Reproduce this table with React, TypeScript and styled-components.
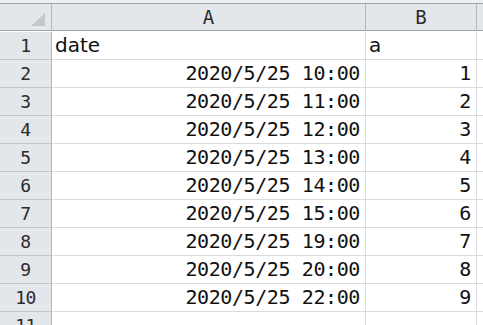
import React from "react";
import styled, { createGlobalStyle } from "styled-components";

const GlobalStyle = createGlobalStyle`
  html, body {
    margin: 0;
    padding: 0;
    background: #ffffff;
    overflow: hidden;
  }
`;

const Window = styled.div`
  width: 483px;
  height: 325px;
  overflow: hidden;
  background: #ffffff;
`;

const TopStrip = styled.div`
  height: 3px;
  background: #eef0f3;
  border-bottom: 1px solid #9da2a8;
`;

const Sheet = styled.div`
  display: grid;
  grid-template-columns: 52px 314px 111px 1fr;
  grid-auto-rows: 28px;
  font-family: "DejaVu Sans Mono", "Liberation Mono", monospace;
  color: #111111;
`;

const HeaderCell = styled.div<{ $corner?: boolean }>`
  height: 27px;
  box-sizing: border-box;
  background: #e3e6eb;
  border-right: 1px solid #b4b8be;
  border-bottom: 1px solid #9fa4ab;
  display: flex;
  align-items: center;
  justify-content: center;
  position: relative;
  font-size: 19px;
  color: #2b2b2b;
`;

const CornerMark = styled.svg`
  position: absolute;
  right: 6px;
  bottom: 4px;
`;

const RowHeader = styled.div`
  box-sizing: border-box;
  background: #e3e6eb;
  border-right: 1px solid #b4b8be;
  border-bottom: 1px solid #c2c6cb;
  display: flex;
  align-items: center;
  justify-content: center;
  font-size: 18px;
  color: #2b2b2b;
  letter-spacing: -0.5px;
`;

const Cell = styled.div<{ $align?: "left" | "right"; $text?: boolean }>`
  box-sizing: border-box;
  border-right: 1px solid #d9dbde;
  border-bottom: 1px solid #d9dbde;
  display: flex;
  align-items: flex-end;
  justify-content: ${(p) => (p.$align === "right" ? "flex-end" : "flex-start")};
  padding: 0 5px 2px 3px;
  font-size: 20px;
  letter-spacing: ${(p) => (p.$text ? "0" : "-0.4px")};
  font-family: ${(p) =>
    p.$text ? '"DejaVu Sans", "Liberation Sans", sans-serif' : "inherit"};
  line-height: 24px;
  white-space: nowrap;
`;

const rows = [
  { date: "2020/5/25 10:00", a: 1 },
  { date: "2020/5/25 11:00", a: 2 },
  { date: "2020/5/25 12:00", a: 3 },
  { date: "2020/5/25 13:00", a: 4 },
  { date: "2020/5/25 14:00", a: 5 },
  { date: "2020/5/25 15:00", a: 6 },
  { date: "2020/5/25 19:00", a: 7 },
  { date: "2020/5/25 20:00", a: 8 },
  { date: "2020/5/25 22:00", a: 9 },
];

export default function App() {
  return (
    <>
      <GlobalStyle />
      <Window>
        <TopStrip />
        <Sheet>
          <HeaderCell $corner>
            <CornerMark width="14" height="13" viewBox="0 0 14 13">
              <polygon points="0,13 14,13 14,0" fill="#c3c7cc" />
            </CornerMark>
          </HeaderCell>
          <HeaderCell>A</HeaderCell>
          <HeaderCell>B</HeaderCell>
          <HeaderCell />

          <RowHeader>1</RowHeader>
          <Cell $text>date</Cell>
          <Cell $text>a</Cell>
          <Cell />

          {rows.map((r, i) => (
            <React.Fragment key={r.date}>
              <RowHeader>{i + 2}</RowHeader>
              <Cell $align="right">{r.date}</Cell>
              <Cell $align="right">{r.a}</Cell>
              <Cell />
            </React.Fragment>
          ))}

          <RowHeader>11</RowHeader>
          <Cell />
          <Cell />
          <Cell />
        </Sheet>
      </Window>
    </>
  );
}
